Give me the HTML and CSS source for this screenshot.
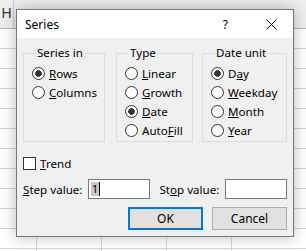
FILE: index.html
```html
<!DOCTYPE html>
<html>
<head>
  <link rel="stylesheet" href="styles.css">
</head>
<body>

  <div class="sheet">
    <div class="col-head"><span class="col-letter">H</span></div>
    <div class="cells"></div>
  </div>

  <div class="dialog">
    <div class="titlebar">
      <span class="title">Series</span>
      <span class="help">?</span>
      <svg class="close" width="11" height="11" viewBox="0 0 11 11">
        <path d="M0.5 0.5 L10.5 10.5 M10.5 0.5 L0.5 10.5" stroke="#000" stroke-width="1" fill="none"/>
      </svg>
    </div>

    <div class="dialog-body">
      <div class="groups">
        <fieldset class="group group-series">
          <legend>Series in</legend>
          <div class="option"><span class="radio checked"></span><span><u>R</u>ows</span></div>
          <div class="option"><span class="radio"></span><span><u>C</u>olumns</span></div>
        </fieldset>
        <fieldset class="group group-type">
          <legend>Type</legend>
          <div class="option"><span class="radio"></span><span><u>L</u>inear</span></div>
          <div class="option"><span class="radio"></span><span><u>G</u>rowth</span></div>
          <div class="option"><span class="radio checked"></span><span><u>D</u>ate</span></div>
          <div class="option"><span class="radio"></span><span>Auto<u>F</u>ill</span></div>
        </fieldset>
        <fieldset class="group group-unit">
          <legend>Date unit</legend>
          <div class="option"><span class="radio checked"></span><span>D<u>a</u>y</span></div>
          <div class="option"><span class="radio"></span><span><u>W</u>eekday</span></div>
          <div class="option"><span class="radio"></span><span><u>M</u>onth</span></div>
          <div class="option"><span class="radio"></span><span><u>Y</u>ear</span></div>
        </fieldset>
      </div>

      <div class="trend">
        <span class="checkbox"></span><span><u>T</u>rend</span>
      </div>

      <div class="values">
        <span class="value-label step-label"><u>S</u>tep value:</span>
        <div class="textbox"><span class="selected">1</span><span class="caret"></span></div>
        <span class="value-label stop-label">St<u>o</u>p value:</span>
        <div class="textbox"></div>
      </div>

      <div class="buttons">
        <button class="btn btn-default">OK</button>
        <button class="btn">Cancel</button>
      </div>
    </div>
  </div>

</body>
</html>
```

FILE: styles.css
```css
body {
  margin: 0;
  width: 306px;
  height: 251px;
  overflow: hidden;
  background: #fff;
  font-family: "Noto Sans", "Open Sans", sans-serif;
  font-size: 11.6px;
  color: #000;
}

/* Spreadsheet behind the dialog */
.sheet {
  height: 251px;
}

.col-head {
  height: 28px;
  background: #efefef;
  border-bottom: 1px solid #b4b4b4;
}

.col-letter {
  display: inline-block;
  width: 14px;
  height: 28px;
  line-height: 26px;
  text-align: center;
  font-size: 14px;
  color: #333;
  border-right: 1px solid #cfcfcf;
  box-sizing: border-box;
  font-family: "Liberation Sans", sans-serif;
}

.cells {
  height: 222px;
  background:
    repeating-linear-gradient(to bottom, transparent 0 19px, #d6d6d6 19px 20px),
    repeating-linear-gradient(to right, transparent 0 64px, #d6d6d6 64px 65px);
  background-position: 0 0, -28px 0;
}

/* Dialog window */
.dialog {
  position: absolute;
  left: 16px;
  top: 9px;
  width: 278px;
  height: 228px;
  box-sizing: border-box;
  border: 1px solid #777;
  background: #f0f0f0;
  box-shadow: 0 0 14px rgba(0, 0, 0, 0.28);
}

.titlebar {
  display: flex;
  align-items: center;
  height: 28px;
  background: #fff;
  padding-left: 8px;
  font-size: 12px;
}

.title {
  flex: 1;
  padding-top: 1px;
}

.help {
  margin-right: 38px;
  padding-top: 1px;
}

.close {
  margin-right: 16px;
}

.dialog-body {
  padding: 7px 6px 0 6px;
}

.groups {
  display: flex;
  align-items: stretch;
}

.group {
  margin: 0;
  padding: 3px 0 1px 8px;
  border: 1px solid #dcdcdc;
  box-sizing: border-box;
  min-width: 0;
}

.group legend {
  padding: 0 1px;
  margin-left: 4px;
  line-height: 16px;
}

.group-series {
  width: 82px;
  margin-right: 11px;
}

.group-type {
  width: 77px;
  margin-right: 9px;
}

.group-unit {
  width: 85px;
}

.option {
  display: flex;
  align-items: center;
  height: 19px;
  white-space: nowrap;
}

.radio {
  width: 13px;
  height: 13px;
  box-sizing: border-box;
  border: 1px solid #333;
  border-radius: 50%;
  background: #fff;
  margin-right: 4px;
  flex: none;
}

.radio.checked {
  background: radial-gradient(circle, #333 0 3px, #fff 3.6px);
}

.trend {
  display: flex;
  align-items: center;
  height: 19px;
  margin-top: 12px;
}

.checkbox {
  width: 13px;
  height: 13px;
  box-sizing: border-box;
  border: 1px solid #333;
  background: #fff;
  margin-right: 4px;
}

.values {
  display: flex;
  align-items: center;
  margin-top: 6px;
}

.value-label {
  white-space: nowrap;
}

.step-label {
  width: 65px;
}

.stop-label {
  margin-left: 10px;
  width: 66px;
}

.textbox {
  display: flex;
  align-items: center;
  width: 62px;
  height: 20px;
  box-sizing: border-box;
  border: 1px solid #7a7a7a;
  background: #fff;
  padding-left: 2px;
}

.selected {
  background: #c8c8c8;
  line-height: 14px;
  padding: 0 1px;
}

.caret {
  width: 1px;
  height: 14px;
  background: #000;
}

.buttons {
  display: flex;
  justify-content: flex-end;
  gap: 9px;
  margin-top: 8px;
}

.btn {
  width: 75px;
  height: 23px;
  box-sizing: border-box;
  border: 1px solid #adadad;
  background: #e1e1e1;
  font-family: inherit;
  font-size: 12px;
  color: #000;
  padding: 0;
}

.btn-default {
  border: 2px solid #0078d7;
}
```
